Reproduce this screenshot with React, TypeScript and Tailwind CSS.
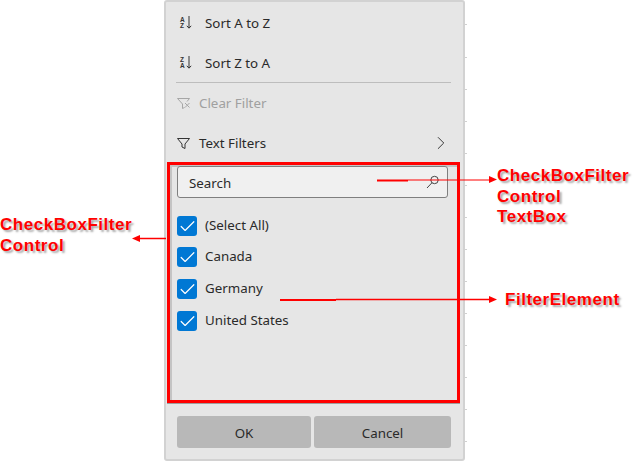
import { Check, ChevronRight } from 'lucide-react';

const countries = ['(Select All)', 'Canada', 'Germany', 'United States'];
const ticks = [24, 57, 89, 121, 153, 185, 217, 249, 281, 313, 345, 377, 409, 441];

function SortIcon({ top, bottom }: { top: string; bottom: string }) {
    return (
        <svg width="16" height="16" viewBox="0 0 16 16" className="text-[#333]">
            <text x="3" y="6.5" fontSize="6.5" fontFamily="'Liberation Sans', sans-serif" fontWeight="700" fill="currentColor">{top}</text>
            <text x="3" y="13" fontSize="6.5" fontFamily="'Liberation Sans', sans-serif" fontWeight="700" fill="currentColor">{bottom}</text>
            <path d="M12 1v12M9.8 10.8l2.2 2.4 2.2-2.4" fill="none" stroke="currentColor" strokeWidth="1" />
        </svg>
    );
}

function FunnelIcon({ muted }: { muted?: boolean }) {
    return (
        <svg width="13" height="11" viewBox="0 0 13 11" className={muted ? 'text-[#a6a6a6]' : 'text-[#333]'}>
            {muted ? (
                <>
                    <path d="M0.5 0.5h12l-2.5 3M5.5 6v4.5l2-1M0.5 0.5L5.5 6" fill="none" stroke="currentColor" />
                    <path d="M8 5l4.5 4.5M12.5 5l-4.5 4.5" fill="none" stroke="currentColor" />
                </>
            ) : (
                <path d="M0.5 0.5h12L8 6v4.5l-3-1.5V6z" fill="none" stroke="currentColor" />
            )}
        </svg>
    );
}

function Callout({ lines, className }: { lines: string[]; className: string }) {
    return (
        <div className={`absolute font-['Liberation_Sans',sans-serif] font-bold text-[17px] leading-[20.5px] tracking-[0.53px] text-[#ff0000] [text-shadow:2px_2px_2px_#a8a8a8] ${className}`}>
            {lines.map((line) => (
                <div key={line}>{line}</div>
            ))}
        </div>
    );
}

export default function App() {
    return (
        <div className="relative w-[643px] h-[463px] overflow-hidden bg-white font-['Noto_Sans',sans-serif] text-[13.33px] text-[#2a2a2a]">
            {/* Filter popup */}
            <div className="ml-[164px] w-[301px] h-[461px] flex flex-col bg-[#e6e6e6] border-2 border-[#d2d2d2] rounded-[3px]">
                <div className="h-[40px] flex items-center gap-[10px] pl-[11px] pt-[2px]">
                    <SortIcon top="A" bottom="Z" />
                    <span className="ml-[2px] mt-[2px]">Sort A to Z</span>
                </div>
                <div className="h-[40px] flex items-center gap-[10px] pl-[11px] pt-[2px]">
                    <SortIcon top="Z" bottom="A" />
                    <span className="ml-[2px] mt-[2px]">Sort Z to A</span>
                </div>
                <div className="h-px ml-[10px] mr-[12px] bg-[#bdbdbd]" />
                <div className="h-[40px] flex items-center gap-[9px] pl-[11px] text-[#a0a0a0]">
                    <FunnelIcon muted />
                    <span className="mt-[2px]">Clear Filter</span>
                </div>
                <div className="h-[40px] flex items-center gap-[9px] pl-[11px] pr-[11px]">
                    <FunnelIcon />
                    <span className="flex-1 mt-[2px]">Text Filters</span>
                    <ChevronRight size={22} strokeWidth={1} />
                </div>

                {/* CheckBoxFilter control */}
                <div className="h-[241px] shrink-0 ml-[1px] w-[293px] border-[3px] border-[#ff0000] mt-[-1px] pl-[7px] pr-[9px] pt-[1px] shadow-[inset_2px_2px_0_#c4c4c4,0_1px_0_#9e9e9e]">
                    <div className="h-[32px] flex items-center justify-between pl-[11px] pr-[7px] bg-[#f0f0f0] border border-[#7f7f7f] rounded-[3px]">
                        <span className="mt-[4px]">Search</span>
                        <svg width="14" height="14" viewBox="0 0 14 14" className="text-[#444]">
                            <circle cx="8.5" cy="5" r="3.7" fill="none" stroke="currentColor" />
                            <path d="M6 7.7L1 13" stroke="currentColor" />
                        </svg>
                    </div>
                    <div className="flex flex-col mt-[18px] gap-[12px]">
                        {countries.map((name) => (
                            <div key={name} className="flex items-center gap-[8px] h-[20px] first:mb-[-1px]">
                                <span className="w-[20px] h-[20px] flex items-center justify-center rounded-[3px] bg-[#0078d4]">
                                    <Check size={19} strokeWidth={1.5} className="text-white" />
                                </span>
                                <span className="-mt-[1px]">{name}</span>
                            </div>
                        ))}
                    </div>
                </div>

                <div className="flex gap-[3px] mt-[13px] px-[11px]">
                    <button className="w-[134px] h-[32px] pt-[3px] rounded-[3px] bg-[#b8b8b8] text-[#2a2a2a]">OK</button>
                    <button className="w-[137px] h-[32px] pt-[3px] rounded-[3px] bg-[#b8b8b8] text-[#2a2a2a]">Cancel</button>
                </div>
            </div>

            {/* grid ticks peeking out behind the popup */}
            {ticks.map((y) => (
                <div key={y} className="absolute left-[465px] w-[2px] h-px bg-[#d0d0d0]" style={{ top: y }} />
            ))}

            {/* Annotations */}
            <Callout lines={['CheckBoxFilter', 'Control']} className="left-0 top-[215px]" />
            <Callout lines={['CheckBoxFilter', 'Control', 'TextBox']} className="left-[497px] top-[166px]" />
            <Callout lines={['FilterElement']} className="left-[505px] top-[290px]" />
            <svg width="643" height="463" className="absolute inset-0 pointer-events-none">
                <path d="M166 238.5H140" stroke="#ff0000" strokeWidth="1.5" />
                <path d="M132 238.5l8-3.5v7z" fill="#ff0000" />
                <path d="M377 180.5H408" stroke="#ff0000" strokeWidth="2" />
                <path d="M408 180H489" stroke="#ff0000" strokeWidth="1" />
                <path d="M497 179.5l-8-3.5v7z" fill="#ff0000" />
                <path d="M280 300H336" stroke="#ff0000" strokeWidth="2" />
                <path d="M336 299.5H489" stroke="#ff0000" strokeWidth="1.5" />
                <path d="M497 299.5l-8-3.5v7z" fill="#ff0000" />
            </svg>
        </div>
    );
}
